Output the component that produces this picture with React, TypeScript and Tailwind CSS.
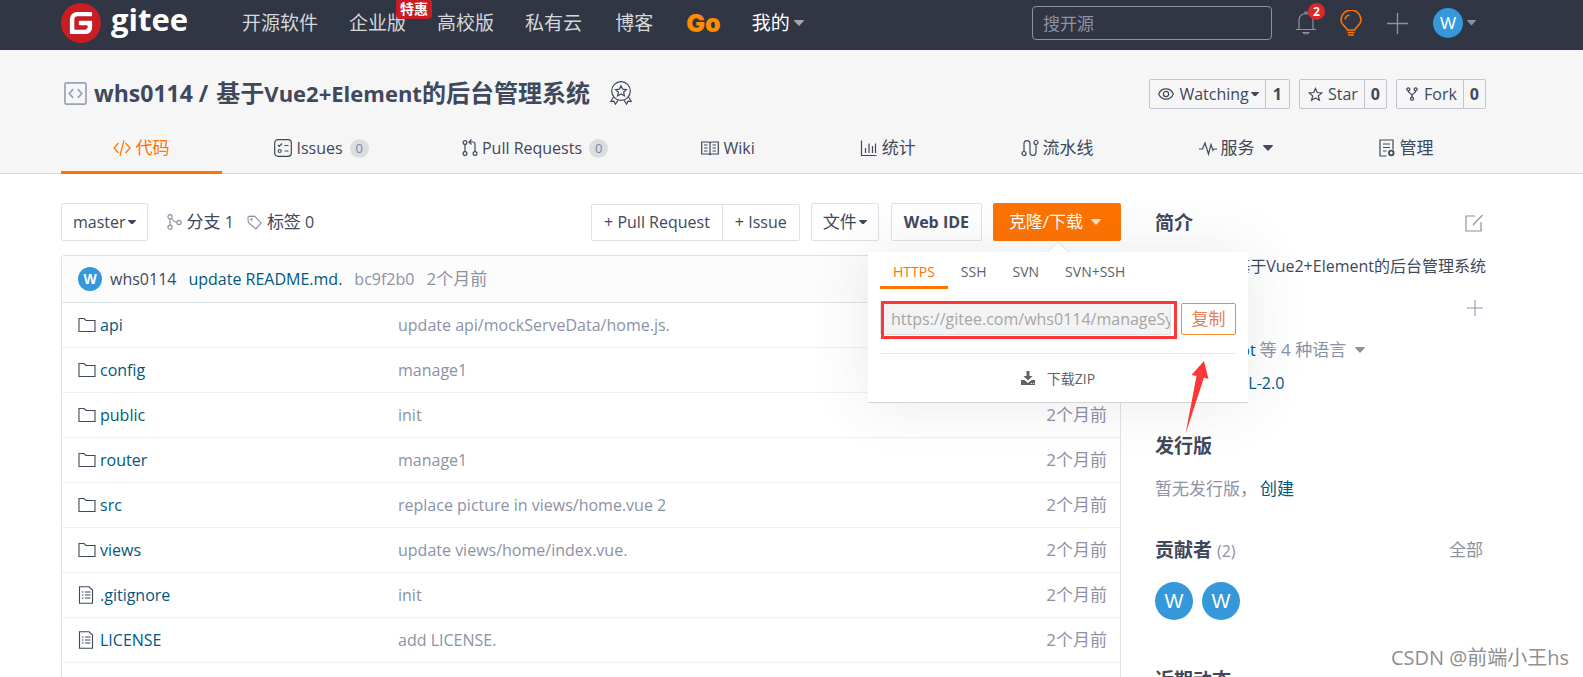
import { useState } from "react";
import type { ReactNode } from "react";
import { SiGitee } from "react-icons/si";

interface IconProps {
  className?: string;
}

interface SvgProps extends IconProps {
  children: ReactNode;
  box?: string;
  width?: number;
}

const Svg = ({ className, children, box = "0 0 18 18", width = 1.2 }: SvgProps) => (
  <svg
    className={`shrink-0 ${className ?? ""}`}
    viewBox={box}
    fill="none"
    stroke="currentColor"
    strokeWidth={width}
    aria-hidden="true"
  >
    {children}
  </svg>
);

const Caret = ({ className }: IconProps) => (
  <svg className={`shrink-0 ${className ?? ""}`} viewBox="0 0 10 6" fill="currentColor" aria-hidden="true">
    <path d="M0.6 0h8.8c.5 0 .7.5.4.9L5.5 5.6c-.3.3-.7.3-1 0L.2.9C-.1.5.1 0 .6 0z" />
  </svg>
);

const CodeIcon = ({ className }: IconProps) => (
  <Svg className={className}>
    <path d="M5.500 4L1 9l4.500 5M12.500 4L17 9l-4.500 5M11 1.500L7 16.500" />
  </Svg>
);

const IssuesIcon = ({ className }: IconProps) => (
  <Svg className={className}>
    <rect x="0.700" y="0.700" width="16.600" height="16.600" rx="3" />
    <path d="M4 6l1.300 1.300L8 4.500M10.500 6.500h4M10.500 12h4" />
    <circle cx="5.700" cy="12" r="1.500" />
  </Svg>
);

const PullIcon = ({ className }: IconProps) => (
  <Svg className={className} box="0 0 16 18">
    <circle cx="3" cy="3.500" r="1.900" />
    <circle cx="3" cy="14.500" r="1.900" />
    <circle cx="13" cy="14.500" r="1.900" />
    <path d="M3 5.500v7M13 12.500V5c0-1.200-.8-2-2-2H7M9.500.5L7 3l2.500 2.500" />
  </Svg>
);

const WikiIcon = ({ className }: IconProps) => (
  <Svg className={className}>
    <path d="M.7 3h7.300l1 1 1-1h7.300v12H10l-1 .8-1-.8H.7zM9 4v11.500M3 6h3.500M3 9h3.500M3 12h3.500M11.500 6H15M11.500 9H15M11.500 12H15" />
  </Svg>
);

const ChartIcon = ({ className }: IconProps) => (
  <Svg className={className}>
    <path d="M1.500 1.500v15h15M5.500 14V9M9 14V4.500M12.500 14V7M15.500 14V4.500" />
  </Svg>
);

const PipelineIcon = ({ className }: IconProps) => (
  <Svg className={className}>
    <circle cx="3" cy="14.500" r="2" />
    <circle cx="15" cy="3.500" r="2" />
    <path d="M3 12.500V5c0-4.500 6-4.500 6 0v8c0 4.500 6 4.500 6 0V5.500" />
  </Svg>
);

const PulseIcon = ({ className }: IconProps) => (
  <Svg className={className}>
    <path d="M0 10h3.500L6 4l3.500 11L12 5.500l2 6 1-1.500h3" />
  </Svg>
);

const ManageIcon = ({ className }: IconProps) => (
  <Svg className={className}>
    <path d="M8.500 17H2V1h13v9.500M5 5h7M5 8.500h7M5 12h3.500" />
    <circle cx="13.300" cy="14" r="2.300" strokeWidth="1.800" />
  </Svg>
);

const RepoIcon = ({ className }: IconProps) => (
  <Svg className={className} box="0 0 24 24" width={1.8}>
    <rect x="1" y="1" width="22" height="22" rx="1.500" />
    <path d="M9.500 7.500L5.500 12l4 4.500M14.500 7.500l4 4.500-4 4.500" />
  </Svg>
);

const MedalIcon = ({ className }: IconProps) => (
  <Svg className={className} box="0 0 22 24" width={1.2}>
    <circle cx="11" cy="10" r="9.300" />
    <path d="M11 4.700l1.600 3.500 3.800.4-2.800 2.600.8 3.700L11 13l-3.400 1.900.8-3.700-2.800-2.600 3.800-.4z" />
    <path d="M3.500 16L.8 20.500l3.200-.3 1.500 3L8 19M18.500 16l2.700 4.500-3.200-.3-1.500 3L14 19" />
  </Svg>
);

const EyeIcon = ({ className }: IconProps) => (
  <Svg className={className} box="0 0 16 12">
    <path d="M.7 6C3.500-.8 12.500-.8 15.300 6 12.500 12.800 3.500 12.800.7 6z" />
    <circle cx="8" cy="6" r="2.600" />
  </Svg>
);

const StarIcon = ({ className }: IconProps) => (
  <Svg className={className} box="0 0 16 16" width={1.3}>
    <path d="M8 1.500l1.900 4.400 4.800.4L11 9.500l1.200 4.700L8 11.700l-4.200 2.500L5 9.500 1.300 6.300l4.800-.4z" />
  </Svg>
);

const ForkIcon = ({ className }: IconProps) => (
  <Svg className={className} box="0 0 12 14" width={1.3}>
    <circle cx="2.300" cy="2.300" r="1.500" />
    <circle cx="9.700" cy="2.300" r="1.500" />
    <circle cx="6" cy="11.700" r="1.500" />
    <path d="M2.300 3.800C2.300 7 6 6 6 8.500v1.700M9.700 3.800C9.700 7 6 6 6 8.500" />
  </Svg>
);

const BranchIcon = ({ className }: IconProps) => (
  <Svg className={className} box="0 0 15 16">
    <circle cx="3" cy="2.800" r="2.100" />
    <circle cx="3" cy="13.200" r="2.100" />
    <circle cx="12" cy="8.500" r="2.100" />
    <path d="M3 5v6M4.500 4.500c1.500 2 3 3.500 5.400 4" />
  </Svg>
);

const TagIcon = ({ className }: IconProps) => (
  <Svg className={className} box="0 0 16 16">
    <path d="M1 2.500L2 1.500l6-.3 7 7.300-5.500 6.300L1.500 8z" />
    <circle cx="4.800" cy="4.800" r=".7" />
  </Svg>
);

const FolderIcon = ({ className }: IconProps) => (
  <Svg className={className} box="0 0 18 16" width={1.1}>
    <path d="M1 14.500v-13h5l2 2h9v11z" />
  </Svg>
);

const FileIcon = ({ className }: IconProps) => (
  <Svg className={className} box="0 0 18 18" width={1.1}>
    <path d="M1.500.8H11L14.500 4v13.200h-13zM3.800 6h1.700M3.800 9h1.700M3.800 12h1.700M7 6h5.500M7 9h5.500M7 12h5.500" />
  </Svg>
);

const BellIcon = ({ className }: IconProps) => (
  <Svg className={className} box="0 0 20 24">
    <path d="M0 18.500h20M3 18.500V9c0-8.500 14-8.500 14 0v9.500M7 21.500c1 2 5 2 6 0zM8.500 2c.3-1.500 2.700-1.500 3 0" />
  </Svg>
);

const BulbIcon = ({ className }: IconProps) => (
  <Svg className={className} box="0 0 22 26" width={1.5}>
    <path d="M7.200 20c0-3-6.200-4.500-6.200-10a10 10 0 0120 0c0 5.500-6.200 7-6.200 10zM5 9.500c.3-2.500 2-4 4.500-4.500M7.500 22.500h7M8 25h6" />
  </Svg>
);

const PlusIcon = ({ className }: IconProps) => (
  <Svg className={className} box="0 0 20 20" width={1.3}>
    <path d="M10 0v20M0 10h20" />
  </Svg>
);

const EditIcon = ({ className }: IconProps) => (
  <Svg className={className}>
    <path d="M10 2H1v15h15V8M8 11L17.500 1" />
  </Svg>
);

const DownloadIcon = ({ className }: IconProps) => (
  <svg className={className} viewBox="0 0 14 14" fill="currentColor" aria-hidden="true">
    <path d="M5.500 0h3v5h3L7 9.500 2.500 5h3zM0 9h3.500L7 12l3.500-3H14v5H0zm10 3v1h1v-1zm2 0v1h1v-1z" />
  </svg>
);

const Avatar = ({ className }: IconProps) => (
  <span
    className={`flex shrink-0 items-center justify-center rounded-full bg-[#3498db] font-['Liberation_Sans'] leading-none text-white ${className ?? ""}`}
  >
    W
  </span>
);

const tabs = [
  { label: "代码", icon: CodeIcon },
  { label: "Issues", icon: IssuesIcon, count: 0 },
  { label: "Pull Requests", icon: PullIcon, count: 0 },
  { label: "Wiki", icon: WikiIcon },
  { label: "统计", icon: ChartIcon },
  { label: "流水线", icon: PipelineIcon },
  { label: "服务", icon: PulseIcon, caret: true },
  { label: "管理", icon: ManageIcon },
];

const files = [
  { name: "api", message: "update api/mockServeData/home.js.", folder: true },
  { name: "config", message: "manage1", folder: true },
  { name: "public", message: "init", folder: true },
  { name: "router", message: "manage1", folder: true },
  { name: "src", message: "replace picture in views/home.vue 2", folder: true },
  { name: "views", message: "update views/home/index.vue.", folder: true },
  { name: ".gitignore", message: "init", folder: false },
  { name: "LICENSE", message: "add LICENSE.", folder: false },
];

const TopBar = () => (
  <header className="flex h-[50px] items-center bg-[#303643] pr-[107px] pl-[61px] text-[19px] text-[#d5d7da]">
    <a href="#" className="flex items-center gap-[10px] pb-1 text-white" aria-label="gitee">
      <span className="grid place-items-center">
        <span className="size-8 rounded-full bg-white [grid-area:1/1]" />
        <SiGitee className="size-10 text-[#c71d23] [grid-area:1/1]" />
      </span>
      <span className="pb-2 text-[31px] leading-8 font-bold">gitee</span>
    </a>
    <nav className="ml-[54px] flex items-center gap-[31px] pb-1 leading-7">
      <a href="#">开源软件</a>
      <a href="#" className="relative">
        企业版
        <span className="absolute -top-[10px] left-[47px] rounded-sm bg-[#c71d23] px-1 text-[14px] leading-5 font-bold whitespace-nowrap text-white">
          特惠
        </span>
      </a>
      <a href="#">高校版</a>
      <a href="#">私有云</a>
      <a href="#" className="px-[2px]">
        博客
      </a>
      <a href="#" className="font-['Inter'] text-[25px] font-black text-[#fe8c00]">
        Go
      </a>
      <a href="#" className="flex items-center gap-1 text-white">
        我的
        <Caret className="w-[10px] text-[#a3a6ad]" />
      </a>
    </nav>
    <div className="ml-auto flex items-center pb-1">
      <input
        aria-label="搜开源"
        placeholder="搜开源"
        className="h-[34px] w-60 rounded-sm border border-[#8c92a4] bg-transparent px-[10px] text-[17px] placeholder:text-[#8c92a4]"
      />
      <button className="relative ml-6 text-[#8c92a4]" aria-label="通知">
        <BellIcon className="h-6 w-5" />
        <span className="absolute -top-2 left-[12px] size-[17px] rounded-full bg-[#db2828] text-center text-[12px] leading-[17px] font-bold text-white">
          2
        </span>
      </button>
      <button className="ml-6 text-[#fe7300]" aria-label="动态">
        <BulbIcon className="h-[26px] w-[22px]" />
      </button>
      <button className="ml-[25px] text-[#8c92a4]" aria-label="新建">
        <PlusIcon className="size-[21px]" />
      </button>
      <button className="ml-[25px] flex items-center gap-1 text-[#8c92a4]" aria-label="账号">
        <Avatar className="size-[30px] text-[17px]" />
        <Caret className="w-[9px]" />
      </button>
    </div>
  </header>
);

const RepoHeader = () => {
  const [active, setActive] = useState("代码");

  return (
    <div className="border-b border-[#dcdcdc] bg-[#f6f6f6] pr-[97px] pl-[61px]">
      <div className="flex items-end justify-between pt-[27px]">
        <h1 className="flex h-8 items-center pl-[3px] text-2xl leading-8 font-bold whitespace-nowrap">
          <RepoIcon className="mr-[7px] size-[23px] text-[#9ba2b6]" />
          <span className="text-[23px]">whs0114 /</span>
          <span className="ml-2">
            基于<span className="text-[22px]">Vue2+Element</span>的后台管理系统
          </span>
          <MedalIcon className="ml-5 h-6 w-[22px]" />
        </h1>
        <div className="flex gap-[9px] text-base leading-7">
          <div className="flex rounded-xs border border-[#c3c5d5]">
            <button className="flex items-center gap-[5px] pr-[6px] pl-2">
              <EyeIcon className="h-3 w-4" />
              <span className="flex items-center gap-[2px]">
                Watching
                <Caret className="w-2" />
              </span>
            </button>
            <a href="#" className="border-l border-[#c3c5d5] px-[7px] font-bold">
              1
            </a>
          </div>
          <div className="flex rounded-xs border border-[#c3c5d5]">
            <button className="flex items-center gap-[5px] pr-[6px] pl-2">
              <StarIcon className="size-[15px]" />
              Star
            </button>
            <a href="#" className="border-l border-[#c3c5d5] px-[6px] font-bold">
              0
            </a>
          </div>
          <div className="flex rounded-xs border border-[#c3c5d5]">
            <button className="flex items-center gap-[6px] pr-[6px] pl-[9px]">
              <ForkIcon className="h-[14px] w-3" />
              Fork
            </button>
            <a href="#" className="border-l border-[#c3c5d5] px-[6px] font-bold">
              0
            </a>
          </div>
        </div>
      </div>
      <nav className="-mb-px flex pt-[14px]">
        {tabs.map(({ label, icon: Icon, count, caret }) => (
          <a
            key={label}
            href="#"
            onClick={() => setActive(label)}
            className={`flex h-[51px] flex-auto items-center justify-center gap-1 border-b-3 pt-[2px] ${
              active === label ? "border-[#fe7300] text-[#fe7300]" : "border-transparent"
            }`}
          >
            <Icon className="h-[18px] max-w-[18px]" />
            <span className={label.charCodeAt(0) > 255 ? "text-[17px]" : "text-base"}>{label}</span>
            {count !== undefined && (
              <span className="-mr-3 ml-[3px] rounded-full bg-[#dcdddf] px-[6px] text-[13px] leading-[19px] text-[#7c87a8]">
                {count}
              </span>
            )}
            {caret && <Caret className="ml-1 w-[10px]" />}
          </a>
        ))}
      </nav>
    </div>
  );
};

const ClonePopup = () => {
  const [protocol, setProtocol] = useState("HTTPS");

  return (
    <div className="absolute top-full left-[65px] z-10 mt-[11px] w-[380px] -translate-x-1/2 border-b border-[#d4d4d5] bg-white px-3 text-[#606266] shadow-[0_0_60px_rgba(64,72,91,0.12)]">
      <span className="absolute -top-2 left-1/2 size-4 -translate-x-1/2 rotate-45 border-t border-l border-[#e0e2e6] bg-white" />
      <div className="relative flex bg-white text-[14px] leading-5">
        {["HTTPS", "SSH", "SVN", "SVN+SSH"].map((item) => (
          <button
            key={item}
            onClick={() => setProtocol(item)}
            className={`border-b-3 px-[13px] pt-[10px] pb-1 ${
              protocol === item ? "border-[#fe7300] text-[#fe7300]" : "border-transparent"
            }`}
          >
            {item}
          </button>
        ))}
      </div>
      <div className="mt-[14px] flex justify-between">
        <div className="relative w-[291px]">
          <input
            aria-label="HTTPS"
            readOnly
            value="https://gitee.com/whs0114/manageSystem.git"
            className="h-8 w-full rounded-xs border border-[#dce3e8] bg-[#f3f3f3] pl-[10px] text-base text-[#a6a6a6]"
          />
          <span className="pointer-events-none absolute -top-[2px] -right-[6px] -bottom-1 left-px border-3 border-[#fc3737]" />
        </div>
        <button className="h-8 w-[55px] rounded-xs border border-[#f38b2c] text-[17px] text-[#e2815c]">复制</button>
      </div>
      <button className="mt-[18px] flex h-[49px] w-full items-center justify-center gap-3 border-t border-[#e8e8e8] text-[14px]">
        <DownloadIcon className="size-[14px]" />
        下载ZIP
      </button>
      <svg className="pointer-events-none absolute top-[109px] left-[317px] h-[73px] w-6" viewBox="0 0 24 73" aria-hidden="true">
        <path d="M19 0l4.500 18-4.500-1.500L.500 73l11-58-5-1z" fill="#fc3737" />
      </svg>
    </div>
  );
};

const Toolbar = () => (
  <div className="flex items-center text-base">
    <button className="flex h-[38px] items-center gap-[2px] rounded-xs border border-[#dce3e8] px-[11px]">
      master
      <Caret className="w-2" />
    </button>
    <a href="#" className="ml-[19px] flex items-center gap-[5px]">
      <BranchIcon className="h-4 w-[15px] text-[#8c92a4]" />
      <span>
        <span className="text-[17px]">分支</span> 1
      </span>
    </a>
    <a href="#" className="ml-[13px] flex items-center gap-[5px]">
      <TagIcon className="size-[15px] text-[#8c92a4]" />
      <span>
        <span className="text-[17px]">标签</span> 0
      </span>
    </a>
    <div className="ml-auto flex h-[37px] rounded-xs border border-[#dce3e8]">
      <button className="px-3">+ Pull Request</button>
      <button className="border-l border-[#dce3e8] px-3">+ Issue</button>
    </div>
    <button className="ml-[11px] flex h-[38px] items-center gap-[2px] rounded-xs border border-[#dce3e8] px-[11px] text-[17px]">
      文件
      <Caret className="w-2" />
    </button>
    <button className="ml-3 h-[38px] rounded-xs border border-[#dce3e8] px-3 font-bold">Web IDE</button>
    <div className="relative ml-[11px]">
      <button className="flex h-[38px] w-32 items-center justify-center gap-2 rounded-xs bg-[#fe7300] pr-1 text-[17px] text-white">
        克隆/下载
        <Caret className="w-[10px] text-[#ffe0c4]" />
      </button>
      <ClonePopup />
    </div>
  </div>
);

const FileTable = () => (
  <div className="mt-[14px] rounded-t-sm border border-b-0 border-[#dce3e8]">
    <div className="flex h-[46px] items-center bg-[#fcfcfc] pl-4 text-base">
      <Avatar className="size-6 text-[14px] font-bold" />
      <a href="#" className="ml-2">
        whs0114
      </a>
      <a href="#" className="ml-3 text-[#005980]">
        update README.md.
      </a>
      <a href="#" className="ml-3 text-[#8c92a4]">
        bc9f2b0
      </a>
      <span className="ml-3 text-[17px] text-[#8c92a4]">2个月前</span>
    </div>
    <table className="w-full table-fixed text-left text-base">
      <tbody>
        {files.map((file) => (
          <tr key={file.name} className="h-[45px] border-t border-[#eef1f5] first:border-[#dce3e8]">
            <td className="w-[336px] pl-4">
              <a href="#" className="flex items-center gap-1 text-[#005980]">
                {file.folder ? (
                  <FolderIcon className="h-4 w-[18px] text-[#40485b]" />
                ) : (
                  <FileIcon className="size-[18px] text-[#40485b]" />
                )}
                {file.name}
              </a>
            </td>
            <td className="text-[#8c92a4]">{file.message}</td>
            <td className="w-32 pr-[13px] text-right text-[17px] text-[#8c92a4]">2个月前</td>
          </tr>
        ))}
        <tr className="h-[45px] border-t border-[#eef1f5]">
          <td colSpan={3} />
        </tr>
      </tbody>
    </table>
  </div>
);

const Sidebar = () => (
  <aside className="w-[331px] shrink-0 text-base leading-6">
    <div className="flex h-10 items-center justify-between">
      <h2 className="text-[19px] font-bold">简介</h2>
      <button className="mr-[3px] text-[#8c92a4]" aria-label="编辑">
        <EditIcon className="size-[18px]" />
      </button>
    </div>
    <p className="mt-[11px] text-right whitespace-nowrap">基于Vue2+Element的后台管理系统</p>
    <div className="mt-[18px] mr-[3px] flex h-6 items-center justify-end text-[#8c92a4]">
      <button aria-label="添加">
        <PlusIcon className="size-4" />
      </button>
    </div>
    <button className="mt-[18px] flex h-6 items-center gap-1 pl-7 text-[17px] text-[#8c92a4]">
      <span className="text-base text-[#005980]">JavaScript</span>
      <span>等 4 种语言</span>
      <Caret className="ml-[5px] w-[10px]" />
    </button>
    <a href="#" className="mt-[9px] block pl-7 text-[#005980]">
      MulanPSL-2.0
    </a>
    <h2 className="mt-[39px] text-[19px] font-bold">发行版</h2>
    <p className="mt-[19px] text-[17px] text-[#8c92a4]">
      暂无发行版，
      <a href="#" className="ml-[3px] text-[#005980]">
        创建
      </a>
    </p>
    <div className="mt-[37px] flex items-start justify-between">
      <h2 className="text-[19px] font-bold">
        贡献者 <span className="text-base font-normal text-[#8c92a4]">(2)</span>
      </h2>
      <a href="#" className="mr-[3px] text-[17px] text-[#8c92a4]">
        全部
      </a>
    </div>
    <div className="mt-[19px] flex gap-[9px]">
      <Avatar className="size-[38px] text-[20px]" />
      <Avatar className="size-[38px] text-[20px]" />
    </div>
    <h2 className="mt-[48px] text-[19px] font-bold">近期动态</h2>
  </aside>
);

const App = () => {
  return (
    <div className="relative h-screen overflow-hidden bg-white font-['Open_Sans','Noto_Sans_CJK_SC',sans-serif] text-[#40485b]">
      <TopBar />
      <RepoHeader />
      <main className="flex gap-[34px] pt-[29px] pr-[97px] pl-[61px]">
        <div className="min-w-0 flex-1">
          <Toolbar />
          <FileTable />
        </div>
        <Sidebar />
      </main>
      <span className="absolute right-[14px] bottom-[5px] text-[20px] leading-7 text-[#8f8f8f]">
        CSDN @前端小王hs
      </span>
    </div>
  );
};

export default App;
